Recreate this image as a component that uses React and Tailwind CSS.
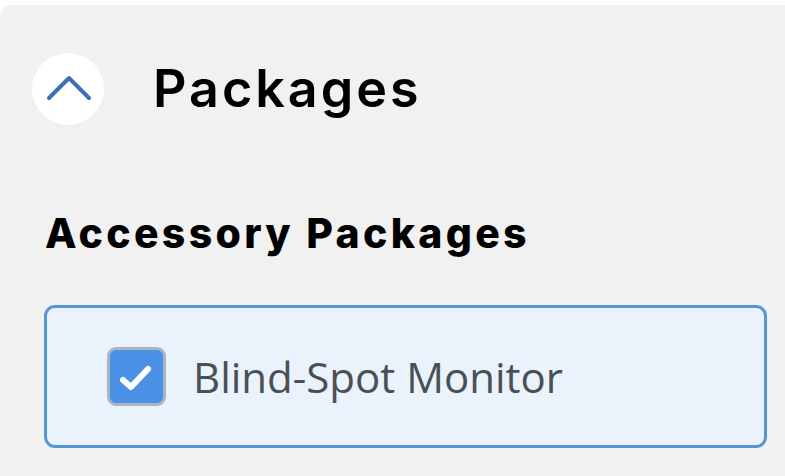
export default function App() {
  return (
    <div className="w-[785px] h-[476px] bg-white overflow-hidden">
      <div className="mt-[5px] h-[471px] bg-[#f1f1f1] rounded-tl-[12px] pt-[48px]">
        <div className="flex items-center pl-[32px] gap-[49px]">
          <div className="w-[72px] h-[72px] rounded-full bg-white flex items-center justify-center">
            <svg width="72" height="72" viewBox="0 0 72 72" fill="none">
              <path d="M17 45 L37 25 L57 45" stroke="#3b6fb6" strokeWidth="4" strokeLinecap="round" strokeLinejoin="round" />
            </svg>
          </div>
          <h1 className="font-['Inter',sans-serif] font-semibold text-[52px] leading-none tracking-[3px] text-black">Packages</h1>
        </div>
        <h2 className="mt-[88px] pl-[45px] font-['Inter',sans-serif] font-extrabold text-[41px] leading-none tracking-[3.3px] text-black">Accessory Packages</h2>
        <div className="mt-[51px] ml-[44px] w-[723px] h-[143px] rounded-[11px] border-[3px] border-[#5596d6] bg-[#eaf3fb] flex items-center pl-[60px] gap-[27px]">
          <div className="w-[59px] h-[59px] rounded-[9px] border-[3px] border-[#a9b5c3] bg-[#4a91e6]">
            <svg width="53" height="53" viewBox="0 0 53 53" fill="none">
              <path d="M13 30 L21 37 L38 19" stroke="white" strokeWidth="6" strokeLinecap="round" strokeLinejoin="round" />
            </svg>
          </div>
          <span className="font-['Open_Sans',sans-serif] text-[42px] leading-none text-[#4a4f55]">Blind-Spot Monitor</span>
        </div>
      </div>
    </div>
  );
}
